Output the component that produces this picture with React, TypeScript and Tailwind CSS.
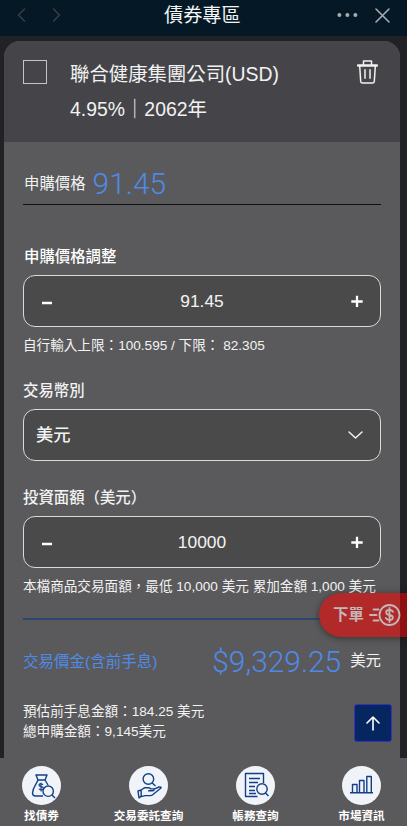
import type { ReactNode } from "react";

const stroke = {
  fill: "none",
  stroke: "currentColor",
  strokeLinecap: "round" as const,
  strokeLinejoin: "round" as const,
};

function TopBar() {
  return (
    <header className="flex h-9 shrink-0 items-center bg-[#041826]">
      <div className="flex w-[164px] items-center gap-[26px] pl-[17px] pb-[6px]">
        <svg className="h-[14px] w-[9px] text-[#3b3d3e]" viewBox="0 0 9 14" {...stroke} strokeWidth="1.6"><path d="M7.5 1 1.5 7l6 6" /></svg>
        <svg className="h-[14px] w-[9px] text-[#3b3d3e]" viewBox="0 0 9 14" {...stroke} strokeWidth="1.6"><path d="m1.5 1 6 6-6 6" /></svg>
      </div>
      <h1 className="h-9 text-[19.2px] leading-[32px] whitespace-nowrap text-[#f2f4f5]">債券專區</h1>
      <div className="ml-auto flex items-center gap-[17px] pr-[17px] pb-[6px] text-[#a7abad]">
        <svg className="h-[4px] w-[21px]" viewBox="0 0 21 4" fill="currentColor"><circle cx="2.4" cy="2" r="2" /><circle cx="10.4" cy="2" r="2" /><circle cx="18.4" cy="2" r="2" /></svg>
        <svg className="h-[15px] w-[15px]" viewBox="0 0 15 15" {...stroke} strokeWidth="1.6"><path d="m1 1 13 13M14 1 1 14" /></svg>
      </div>
    </header>
  );
}

function Stepper({ value }: { value: string }) {
  return (
    <div className="flex h-[52px] items-center justify-between rounded-xl border border-[#dadada] bg-[#4a4a4a] pr-[17px] pl-[17px]">
      <svg className="h-[12px] w-[12px] text-white" viewBox="0 0 12 12" fill="none" stroke="currentColor" strokeWidth="2.5"><path d="M1 8h10" /></svg>
      <span className="text-[17.4px] leading-5 text-[#f4f4f4]">{value}</span>
      <svg className="h-[12px] w-[12px] text-white" viewBox="0 0 12 12" fill="none" stroke="currentColor" strokeWidth="2.3"><path d="M.3 6.5h11.4M6 .8V12" /></svg>
    </div>
  );
}

function NavItem({ label, className, children }: { label: string; className: string; children: ReactNode }) {
  return (
    <div className={`flex shrink-0 flex-col items-center ${className}`}>
      <div className="flex size-[39px] items-center justify-center rounded-full bg-[#f0f4f8] text-[#123f88]">
        <svg className="size-[28px]" viewBox="0 0 28 28" {...stroke} strokeLinecap="butt" strokeWidth="1.4">{children}</svg>
      </div>
      <span className="mt-[3px] text-[11.6px] leading-4 font-bold whitespace-nowrap text-white">{label}</span>
    </div>
  );
}

export default function App() {
  return (
    <div className="relative flex h-[826px] w-[407px] flex-col overflow-hidden bg-[#202226] font-['Liberation_Sans','Noto_Sans_CJK_TC',sans-serif] text-[#f2f2f2]">
      <TopBar />
      <main className="mt-[5px] mr-[10px] ml-1 flex h-[717px] w-[396px] shrink-0 flex-col rounded-t-2xl bg-[#5a5a5c]">
        <section className="flex h-[101px] shrink-0 items-start rounded-t-2xl bg-[#454549] pl-[19px]">
          <div className="mt-[19px] size-[24px] border border-[#c4c4c6]" />
          <div className="mt-[16px] ml-[23px] w-[287px] text-[19.4px] leading-[35px] whitespace-nowrap">
            <p>聯合健康集團公司(USD)</p>
            <p>4.95%｜2062年</p>
          </div>
          <svg className="mt-[19px] h-[24px] w-[21px]" viewBox="0 0 21 24" {...stroke} strokeWidth="1.5">
            <path d="M.8 5h19.4v1H.8zM6.5 4.8V1h8v3.8M2.7 6.2l1 15.2q.2 1.6 1.8 1.6h10q1.6 0 1.8-1.6l1-15.2M8 9.7v8.6M13 9.7v8.6" />
          </svg>
        </section>

        <section className="flex flex-col px-[19px]">
          <div className="flex h-[63px] items-start border-b border-[#101010]">
            <span className="mt-[32px] ml-[1px] text-[15.4px] leading-5">申購價格</span>
            <span className="mt-[24px] ml-[7px] font-[Roboto] text-[29.9px] leading-[36px] font-light text-[#4f8ae8]">91.45</span>
          </div>

          <h2 className="mt-[42px] ml-[1px] h-[28px] text-[15.4px] leading-5 font-medium text-white">申購價格調整</h2>
          <Stepper value="91.45" />
          <p className="mt-[9px] h-[20px] text-[13.6px] leading-5 whitespace-pre">自行輸入上限：100.595 / 下限： 82.305</p>

          <h2 className="mt-[25px] h-[28px] text-[15.4px] leading-5 font-medium">交易幣別</h2>
          <div className="flex h-[52px] items-center justify-between rounded-xl border border-[#dadada] bg-[#4a4a4a] pr-[17px] pl-[12px]">
            <span className="text-[17.3px] leading-5 font-medium">美元</span>
            <svg className="h-[8px] w-[15px]" viewBox="0 0 15 8" {...stroke} strokeWidth="1.5"><path d="m1 1 6.5 6L14 1" /></svg>
          </div>

          <h2 className="mt-[27px] h-[28px] font-['Liberation_Sans','Noto_Sans_CJK_JP',sans-serif] text-[15.4px] leading-5 font-medium">投資面額（美元）</h2>
          <Stepper value="10000" />
          <p className="mt-[9px] h-[20px] text-[13.6px] leading-5 whitespace-nowrap">本檔商品交易面額，最低 10,000 美元 累加金額 1,000 美元</p>

          <div className="mt-[21px] h-[2px] bg-[#2f4672]" />
          <div className="flex h-[64px] items-start justify-between">
            <span className="mt-[32px] text-[15.5px] leading-5 text-[#4f8ae8]">交易價金(含前手息)</span>
            <div className="flex items-start">
              <span className="mt-[24px] mr-[9px] font-[Roboto] text-[29.9px] leading-[36px] font-light text-[#4f8ae8]">$9,329.25</span>
              <span className="mt-[31px] text-[15.4px] leading-5">美元</span>
            </div>
          </div>
          <div className="mt-[18px] text-[13.6px] leading-[19.5px]">
            <p>預估前手息金額：184.25 美元</p>
            <p>總申購金額：9,145美元</p>
          </div>
        </section>
      </main>

      <nav className="flex h-[68px] shrink-0 bg-[#5a5a5c] pt-[8px]">
        <NavItem label="找債券" className="ml-[1px] w-[81px]">
          <path d="M8 3h11l-2 5h-7zM10 8c-2 5-5 7-5.5 13q0 3 3 3H15M17 8l3 5" />
          <path strokeWidth="1.2" d="M15.2 12.5q-4-1.5-4.2.7c0 2 4.4 1 4.4 3.1 0 2-3.1 2-4.6.6M13 10.7v8.8" />
          <circle cx="20.2" cy="19.2" r="5.2" />
          <path d="m24 23 3 3" />
        </NavItem>
        <NavItem label="交易委託查詢" className="ml-[16px] w-[101px]">
          <circle cx="13.4" cy="7" r="5.3" />
          <path d="m17.2 10.9 3.3 3M3 19l3.2-1v6.4L4 25.8zM6.2 18l3.5-2.3h4.5l1.5 1.2h3.2q.8 1.3-.8 1.8h-5M19 17.2l5-2.2q2.6-.3 2 1l-8.3 6.7q-1 .8-2.3.9H10l-3.8 1" />
        </NavItem>
        <NavItem label="帳務查詢" className="ml-[6px] w-[101px]">
          <path d="M21.5 11V1.5h-18v23h12M7 6.5h11M7 10.5h9M7 14.5h6M7 18.5h6M7 21.5h7" />
          <circle cx="20" cy="17" r="5.2" />
          <path d="m23.5 21 3 3" />
        </NavItem>
        <NavItem label="市場資訊" className="ml-[5px] w-[101px]">
          <path d="M2 20.8h23M4.5 20.5v-8H9v8M11.5 20.5v-12H16v12M18.8 20.5v-16h4.5v16" />
        </NavItem>
      </nav>

      <button className="absolute top-[593px] left-[319px] flex h-[44px] w-[100px] items-start rounded-l-full bg-[#b12929] text-[#c2b6b6] shadow-[0_1px_7px_rgba(0,0,0,0.45)]">
        <span className="absolute top-0 left-[81px] h-full w-[7px] bg-[#8e1012]" />
        <span className="mt-[12px] ml-[14px] text-[15.4px] leading-5 font-bold whitespace-nowrap">下單</span>
        <svg className="relative mt-[11px] ml-[5px] h-[22px] w-[33px] shrink-0" viewBox="0 0 33 22" {...stroke} strokeWidth="1.8">
          <path d="M4.5 5.5h5M1 11h6.5M4.5 16.5h5" />
          <circle cx="20.5" cy="11" r="10" />
          <path d="M24 7.7q-1-1.7-3.5-1.7c-4.5 0-4.5 4.3 0 5s4.5 5 0 5q-2.7 0-3.7-2M20.5 4v14" />
        </svg>
      </button>

      <button className="absolute top-[704px] left-[354px] flex size-[38px] items-center justify-center rounded-[3px] border border-[#3532ba] bg-[#05265f] text-white">
        <svg className="h-[15px] w-[14px]" viewBox="0 0 14 15" {...stroke} strokeWidth="1.6"><path d="M7 14V1M1 7l6-6 6 6" /></svg>
      </button>
    </div>
  );
}
